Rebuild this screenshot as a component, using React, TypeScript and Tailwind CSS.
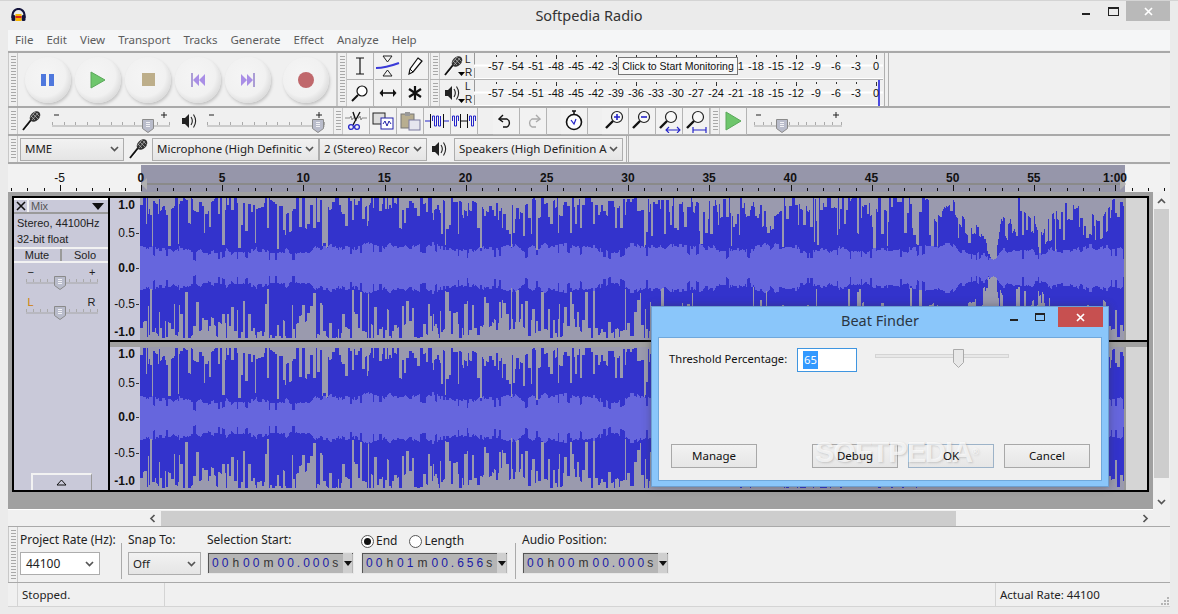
import React from "react";

function mulberry(a: number) {
  return () => {
    a |= 0; a = (a + 0x6d2b79f5) | 0;
    let t = Math.imul(a ^ (a >>> 15), 1 | a);
    t = (t + Math.imul(t ^ (t >>> 7), 61 | t)) ^ t;
    return ((t ^ (t >>> 14)) >>> 0) / 4294967296;
  };
}
function noise(seed: number, n: number, step: number) {
  const r = mulberry(seed);
  const pts = Array.from({ length: Math.ceil(n / step) + 3 }, () => r());
  return Array.from({ length: n }, (_, i) => {
    const p = i / step, k = Math.floor(p), f = p - k, s = f * f * (3 - 2 * f);
    return pts[k] * (1 - s) + pts[k + 1] * s;
  });
}
const W = 984;
function dip(x: number) {
  let m = 1;
  const g = (c: number, w: number, d: number) => 1 - d * Math.exp(-((x - c) ** 2) / (2 * w * w));
  m *= g(852, 6, 0.88) * g(832, 12, 0.4) * g(900, 5, 0.45) * g(960, 6, 0.25) * g(868, 3, 0.35) * g(800, 5, 0.2);
  return m;
}
function buildChannel(seed: number, cy: number) {
  const big = noise(seed, W, 60), mid = noise(seed + 1, W, 14), rm = noise(seed + 2, W, 26), rf = noise(seed + 3, W, 5);
  const r = mulberry(seed + 9);
  let dark = "", light = "", spike = 0, cur = 1, curL = 1, rj = 0;
  const pick = () => {
    const q = r();
    if (q < 0.05) return 0.3 + r() * 0.1;
    if (q < 0.24) return 0.5 + r() * 0.22;
    return 0.8 + r() * 0.36;
  };
  for (let x = 0; x < W; x++) {
    if (spike <= 0) {
      spike = 1 + Math.floor(r() * 3);
      cur = pick();
      curL = pick();
      rj = r() < 0.1 ? -0.08 : r() * 0.07;
    }
    spike--;
    const env = (0.84 + 0.2 * big[x] + 0.12 * mid[x]) * dip(x);
    const up = Math.min(1.09, cur * env), lo = Math.min(1.09, curL * env);
    const rmsv = (0.18 + 0.14 * rm[x] + 0.08 * rf[x] + rj) * (0.3 + 0.7 * dip(x));
    const px = x + 0.5;
    dark += `M${px} ${(cy - up * 64).toFixed(0)}V${(cy + lo * 64).toFixed(0)}`;
    light += `M${px} ${(cy - rmsv * 64).toFixed(0)}V${(cy + rmsv * 64).toFixed(0)}`;
  }
  return { dark, light };
}
const ch1 = buildChannel(11, 70);
const ch2 = buildChannel(11, 71);

function Grip() {
  return (
    <div className="w-[10px] h-full shrink-0 flex justify-center border-x border-[#c8c8c8] py-[3px]">
      <div className="w-[5px] h-full bg-[repeating-linear-gradient(to_bottom,#a8a8a8_0px,#a8a8a8_1px,transparent_1px,transparent_3px)]" />
    </div>
  );
}
function Mic({ arrow }: { arrow?: boolean }) {
  return (
    <svg width="22" height="22" viewBox="0 0 22 22" className="shrink-0">
      <path d="M2 20 L10 10" stroke="#111" strokeWidth="2" />
      <path d="M3.5 20.5 L11 11.5" stroke="#fff" strokeWidth="0.7" />
      <ellipse cx="14" cy="6.5" rx="6" ry="4.4" transform="rotate(-45 14 6.5)" fill="#333" />
      <path d="M10 6l4 4M12 4l5 5M14.500 2.500l4 4M11 10l6-7M9.500 7.500L14 2" stroke="#bbb" strokeWidth="0.7" />
      {arrow && <path d="M15 17h7l-3.500 4z" fill="#000" />}
    </svg>
  );
}
function Speaker({ arrow }: { arrow?: boolean }) {
  return (
    <svg width="22" height="22" viewBox="0 0 22 22" className="shrink-0">
      <path d="M2 8h3l4-4v14l-4-4H2z" fill="#222" />
      <path d="M11 7c1.600 2.400 1.600 5.600 0 8M13.500 4.500c2.600 4 2.600 9 0 13" fill="none" stroke="#222" strokeWidth="1.1" />
      {arrow && <path d="M15 17h7l-3.500 4z" fill="#000" />}
    </svg>
  );
}
function Round({ children }: { children: React.ReactNode }) {
  return (
    <div className="w-[46px] h-[46px] shrink-0 rounded-full bg-[radial-gradient(circle_at_43%_41%,#f5f5f5_0%,#f1f1f1_55%,#dcdcdc_74%,#c4c4c4_90%,#b2b2b2_100%)] shadow-[1px_2px_3px_#c4c4c4] flex items-center justify-center">
      {children}
    </div>
  );
}
function Cell({ children }: { children?: React.ReactNode }) {
  return (
    <div className="w-[27px] h-[27px] shrink-0 flex items-center justify-center bg-[#f2f2f2] border-r border-b border-[#b4b4b4]">
      {children}
    </div>
  );
}
function Thumb({ x, y }: { x: number; y: number }) {
  return (
    <g transform={`translate(${x - 6} ${y})`}>
      <path d="M0.500 0.500h11v9l-5.500 4l-5.500-4z" fill="#b9bccb" stroke="#8a8a8a" />
      <path d="M4 3.500h4M4 5.500h4M4 7.500h4" stroke="#fff" strokeWidth="0.8" />
    </g>
  );
}
function Slider({ width, at, line = 17, marks = true }: { width: number; at: number; line?: number; marks?: boolean }) {
  const ticks = [];
  for (let i = 0; i <= 10; i++) ticks.push((width - 1) * (i / 10));
  return (
    <svg width={width} height={line + 7} viewBox={`0 0 ${width} ${line + 7}`} className="shrink-0">
      {ticks.map((t, i) => <path key={i} d={`M${Math.round(t) + 0.5} ${line - 4}v3`} stroke="#aaa" />)}
      <path d={`M0 ${line}h${width}`} stroke="#a8a8a8" strokeWidth="1.2" />
      {marks && <path d={`M2 ${line - 11}h5M${width - 9} ${line - 11}h6M${width - 6} ${line - 14}v6`} stroke="#222" />}
      <Thumb x={at} y={line - 7} />
    </svg>
  );
}
function Chev({ c = "#555" }: { c?: string }) {
  return (
    <svg width="9" height="6" viewBox="0 0 9 6" className="shrink-0">
      <path d="M1 1l3.500 3.500L8 1" fill="none" stroke={c} strokeWidth="1.7" />
    </svg>
  );
}
function Sel({ w, children }: { w: string; children: string }) {
  return (
    <div className={`${w} h-[23px] shrink-0 flex items-center justify-between gap-[2px] pl-[4px] pr-[4px] border border-[#adadad] bg-gradient-to-b from-[#f2f2f2] to-[#e5e5e5] text-[11.5px] text-[#222] overflow-hidden`}>
      <span className="whitespace-nowrap">{children}</span>
      <Chev />
    </div>
  );
}
const dbs = ["-57", "-54", "-51", "-48", "-45", "-42", "-39", "-36", "-33", "-30", "-27", "-24", "-21", "-18", "-15", "-12", "-9", "-6", "-3", "0"];
function Meter({ blue }: { blue?: boolean }) {
  return (
    <div className="relative w-[409px] h-[27px] bg-[#f0f0f0] shrink-0 overflow-hidden">
      <svg width="409" height="27" className="absolute inset-0">
        <path d="M0.500 0V12M0.500 15V26" stroke="#9a9a9a" />
        <path d="M0 12.500H409M0 26H409" stroke="#fff" strokeWidth="2" />
        {dbs.map((_, i) => <path key={i} d={`M${22 + i * 20}.5 2v${i % 4 === 3 ? 4 : 2}`} stroke="#333" />)}
        {blue && <path d="M405 0V27" stroke="#4a4ae0" strokeWidth="2" />}
      </svg>
      <div className="absolute left-[12px] top-[6px] flex font-['Liberation_Sans',sans-serif] text-[11px] leading-[14px] text-[#111]">
        {dbs.map((d) => (
          <span key={d} className="w-[20px] text-center">{d}</span>
        ))}
      </div>
    </div>
  );
}
function LR() {
  return (
    <div className="flex flex-col text-[10px] leading-[13px] text-[#222] font-['Liberation_Sans',sans-serif] w-[8px]">
      <span>L</span>
      <span>R</span>
    </div>
  );
}
const secs = ["-5", "0", "5", "10", "15", "20", "25", "30", "35", "40", "45", "50", "55", "1:00"];
function Ruler() {
  return (
    <div className="relative h-[27px] mt-[1px] bg-[#f2f2f2] flex shrink-0">
      <div className="w-[133px] shrink-0" />
      <div className="w-[984px] shrink-0 bg-[#9696aa]" />
      <svg width="1162" height="27" className="absolute inset-0">
        <path d="M133 19H1117" stroke="#8a8a8a" strokeWidth="2" />
        {Array.from({ length: 73 }, (_, i) => 3.1 + i * 16.24).map((t, i) => (
          <path key={i} d={`M${Math.round(t) + 0.5} ${i % 5 === 3 ? 20 : 23}V26`} stroke="#111" />
        ))}
        <path d="M139 13l-6 6l6 6z" fill="#b0b0b0" />
        <path d="M1112 13l6 6l-6 6z" fill="#b0b0b0" />
      </svg>
      <div className="absolute left-[11px] top-[6px] flex font-['Liberation_Sans',sans-serif] text-[12px] leading-[14px] text-[#111]">
        {secs.map((s) => (
          <span key={s} className={`w-[81.2px] text-center shrink-0 whitespace-nowrap ${s === "-5" ? "" : "font-bold"}`}>{s}</span>
        ))}
      </div>
    </div>
  );
}
function Lab({ t, bold, tick, mt }: { t: string; bold?: boolean; tick?: boolean; mt: string }) {
  return (
    <span className={`${mt} h-[14px] flex items-center gap-[1px] ${bold ? "font-bold" : ""}`}>
      {t}
      <i className={`w-[3px] h-px ${tick ? "bg-[#333]" : ""}`} />
    </span>
  );
}
function Amp1() {
  return (
    <div className="w-[30px] h-full shrink-0 bg-[#c9c9d9] flex flex-col items-end pr-[1px] font-['Liberation_Sans',sans-serif] text-[12px] text-[#111]">
      <Lab t="1.0" bold mt="mt-[0px]" />
      <Lab t="0.5" tick mt="mt-[14px]" />
      <Lab t="0.0" bold tick mt="mt-[21px]" />
      <Lab t="-0.5" tick mt="mt-[22px]" />
      <Lab t="-1.0" bold mt="mt-[14px]" />
    </div>
  );
}
function Amp2() {
  return (
    <div className="w-[30px] h-full shrink-0 bg-[#c9c9d9] flex flex-col items-end pr-[1px] font-['Liberation_Sans',sans-serif] text-[12px] text-[#111]">
      <Lab t="1.0" bold mt="mt-[0px]" />
      <Lab t="0.5" tick mt="mt-[15px]" />
      <Lab t="0.0" bold tick mt="mt-[20px]" />
      <Lab t="-0.5" tick mt="mt-[22px]" />
      <Lab t="-1.0" bold mt="mt-[14px]" />
    </div>
  );
}
function Channel({ d, h }: { d: { dark: string; light: string }; h: number }) {
  return (
    <div className="flex-1 min-w-0 bg-[#d5d5d5] flex overflow-hidden" style={{ height: h }}>
      <svg width="984" height={h} viewBox={`0 0 984 ${h}`} shapeRendering="crispEdges" className="shrink-0 bg-[#9a9aae]">
        <path d={d.dark} stroke="#3333cc" strokeWidth="1" fill="none" />
        <path d={d.light} stroke="#6666dd" strokeWidth="1" fill="none" />
      </svg>
      <div className="w-[2px] bg-[#9a9a9a] shrink-0" />
    </div>
  );
}
function Panel() {
  return (
    <div className="w-[96px] shrink-0 h-full bg-[#c9c9d9] border-r-2 border-black flex flex-col text-[11px] text-[#222] font-['Liberation_Sans',sans-serif]">
      <div className="flex h-[16px] border-b-2 border-[#9a9a9a]">
        <div className="w-[15px] flex items-center justify-center border-r-2 border-[#f4f4f4] border-t-2 border-t-white">
          <svg width="10" height="10" viewBox="0 0 10 10"><path d="M1 1l8 8M9 1l-8 8" stroke="#111" strokeWidth="1.6" /></svg>
        </div>
        <div className="flex-1 flex items-center justify-between pl-[2px] pr-[4px] text-[#555] border-t-2 border-white">
          <span>Mix</span>
          <svg width="12" height="7" viewBox="0 0 12 7"><path d="M0 0h12l-6 7z" fill="#111" /></svg>
        </div>
      </div>
      <div className="h-[33px] pl-[3px] pt-[1px] leading-[16px] whitespace-nowrap">
        <div>Stereo, 44100Hz</div>
        <div>32-bit float</div>
      </div>
      <div className="flex h-[16px] border-y-2 border-[#f2f2f2] text-center leading-[13px]">
        <div className="flex-1 border-r-2 border-[#9a9a9a]">Mute</div>
        <div className="flex-1">Solo</div>
      </div>
      <div className="flex-1 flex flex-col items-center pt-[4px] pl-[1px]">
        <div className="w-[70px] flex justify-between px-[1px] text-[11px] leading-[10px] h-[10px]"><span>−</span><span>+</span></div>
        <div className="-mt-[5px]"><Slider width={72} at={34} line={11} marks={false} /></div>
        <div className="w-[70px] flex justify-between px-[1px] text-[11px] leading-[10px] h-[10px] mt-[7px]"><span className="text-[#d08000]">L</span><span>R</span></div>
        <div className="-mt-[5px]"><Slider width={72} at={34} line={11} marks={false} /></div>
      </div>
      <div className="h-[17px] w-[61px] self-center bg-[#c9c9d9] border-t-2 border-l-2 border-r border-[#f2f2f2] border-r-[#9a9a9a] flex items-center justify-center">
        <svg width="11" height="7" viewBox="0 0 11 7"><path d="M5.500 1L10 6H1z" fill="none" stroke="#111" /></svg>
      </div>
    </div>
  );
}
function Digits({ t }: { t: string }) {
  return (
    <div className="w-[147px] h-[22px] shrink-0 border border-[#e8e8e8] bg-[#b5b5b5] flex items-center justify-between pl-[4px] pr-[1px] shadow-[inset_1px_1px_0_#555] overflow-hidden">
      <span className="flex font-['Liberation_Sans',sans-serif] text-[12px] text-[#1a1aa8] tracking-[3px] whitespace-pre">
        {t.split("").map((c, i) =>
          c === "s" ? <span key={i} className="text-[#333]">{c}</span>
          : /[hm]/.test(c) ? <span key={i} className="text-[#333] mx-[1px]">{c}</span>
          : <span key={i}>{c}</span>
        )}
      </span>
      <div className="w-[9px] h-full bg-[#cfcfcf] flex items-center justify-center shrink-0">
        <svg width="8" height="5" viewBox="0 0 8 5"><path d="M0 0h8L4 5z" fill="#111" /></svg>
      </div>
    </div>
  );
}
function Radio({ on }: { on?: boolean }) {
  return (
    <div className="w-[13px] h-[13px] rounded-full border border-[#555] bg-white flex items-center justify-center shrink-0">
      {on && <div className="w-[7px] h-[7px] rounded-full bg-[#111]" />}
    </div>
  );
}
function DlgBtn({ children, tone = "border-[#a8a8a8]" }: { children: React.ReactNode; tone?: string }) {
  return (
    <div className={`w-[86px] h-[24px] shrink-0 border ${tone} bg-gradient-to-b from-[#f2f2f2] to-[#e6e6e6] text-[11.5px] text-[#111] flex items-center justify-center`}>
      <span className="relative z-10">{children}</span>
    </div>
  );
}
const Zoomer = ({ extra }: { extra?: React.ReactNode }) => (
  <svg width="24" height="24" viewBox="0 0 24 24">
    <circle cx="14" cy="8" r="5.500" fill="#f8f8f8" stroke="#222" strokeWidth="1.2" />
    <path d="M10 12L3 19" stroke="#111" strokeWidth="2.4" />
    {extra}
  </svg>
);

export default function App() {
  return (
    <div className="relative w-[1178px] h-[614px] overflow-hidden bg-[#ebebeb] font-['Noto_Sans',sans-serif] border-t border-[#d4d4d4]">
      {/* title bar */}
      <div className="h-[29px] flex items-center relative pl-[11px]">
        <svg width="15" height="14" viewBox="0 0 15 14" className="-mt-[2px]">
          <path d="M1.500 10V7a6 6 0 0 1 12 0v3" fill="none" stroke="#14143c" strokeWidth="2.2" />
          <rect x="0.500" y="7" width="4" height="6" rx="1.500" fill="#14143c" />
          <rect x="10.500" y="7" width="4" height="6" rx="1.500" fill="#14143c" />
          <rect x="4.500" y="6" width="6" height="7" fill="#f7b500" />
          <path d="M4.500 9h6" stroke="#d8221c" strokeWidth="2" />
        </svg>
        <div className="absolute left-0 right-0 top-[4px] text-center text-[14.5px] leading-[20px] text-[#333]">Softpedia Radio</div>
        <div className="absolute right-[8px] top-0 flex items-start">
          <div className="w-[8px] h-[2px] bg-[#222] mt-[12px] mr-[18px]" />
          <div className="w-[11px] h-[9px] border border-[#222] border-t-2 mt-[6px] mr-[7px]" />
          <div className="w-[44px] h-[20px] bg-[#b9b9b9] flex items-center justify-center">
            <svg width="9" height="9" viewBox="0 0 9 9"><path d="M1 1l7 7M8 1L1 8" stroke="#fff" strokeWidth="1.7" /></svg>
          </div>
        </div>
      </div>

      <div className="mx-[8px] flex flex-col h-[577px] bg-[#f0f0f0]">
        {/* menu */}
        <div className="h-[20px] shrink-0 bg-[#f5f6f7] flex items-center pl-[7px] gap-[13px] text-[11.5px] text-[#5c5c5c]">
          {["File", "Edit", "View", "Transport", "Tracks", "Generate", "Effect", "Analyze", "Help"].map((m) => <span key={m}>{m}</span>)}
        </div>

        {/* row 1 */}
        <div className="h-[57px] shrink-0 mt-[1px] flex border-y-2 border-[#a9a9a9] bg-[#f0f0f0]">
          <Grip />
          <div className="w-[319px] shrink-0 flex items-center pl-[7px] gap-[4px] border-r border-[#c8c8c8]">
            <Round><svg width="14" height="14"><rect x="0" y="1" width="5" height="12" fill="#4f78dd" /><rect x="8" y="1" width="5" height="12" fill="#4f78dd" /></svg></Round>
            <Round><svg width="16" height="18"><path d="M1 1v16l14-8z" fill="#6ec66c" stroke="#5aa85a" /></svg></Round>
            <Round><div className="w-[13px] h-[13px] bg-[#bdae8a]" /></Round>
            <Round><svg width="14" height="14"><path d="M1 0v14" stroke="#8c78c8" strokeWidth="1.4" /><path d="M8 1L2 7l6 6zM14 1L8 7l6 6z" fill="#a98ee6" /></svg></Round>
            <Round><svg width="14" height="14"><path d="M13 0v14" stroke="#8c78c8" strokeWidth="1.4" /><path d="M6 1l6 6l-6 6zM0 1l6 6l-6 6z" fill="#a98ee6" /></svg></Round>
            <div className="w-[4px] shrink-0" />
            <Round><div className="w-[16px] h-[16px] rounded-full bg-[#c0686c]" /></Round>
          </div>
          <Grip />
          <div className="w-[83px] shrink-0 grid grid-cols-3 content-start">
            <Cell><svg width="12" height="18"><path d="M2 1h8M6 1v16M2 17h8" stroke="#111" strokeWidth="1.2" fill="none" /></svg></Cell>
            <Cell><svg width="25" height="22" viewBox="0 0 25 22"><path d="M8 1h9l-4.500 6zM8 21h9l-4.500-6z" fill="none" stroke="#222" /><path d="M1 13c8 0 12-1 23-5" stroke="#3a3ad8" strokeWidth="2.2" fill="none" /></svg></Cell>
            <Cell><svg width="16" height="18" viewBox="0 0 16 18"><path d="M11 1l4 3L6 15l-4 2l1-5z" fill="#fff" stroke="#111" strokeWidth="1.2" /><path d="M3 12l3 3" stroke="#111" /></svg></Cell>
            <Cell><svg width="18" height="18" viewBox="0 0 18 18"><circle cx="11" cy="7" r="5" fill="#fff" stroke="#111" strokeWidth="1.2" /><path d="M7 11l-6 6" stroke="#111" strokeWidth="2" /></svg></Cell>
            <Cell><svg width="18" height="10" viewBox="0 0 18 10"><path d="M4 1L0.500 5L4 9zM14 1l3.500 4L14 9z" fill="#111" /><path d="M3 5h12" stroke="#111" strokeWidth="1.6" /></svg></Cell>
            <Cell><svg width="14" height="14" viewBox="0 0 14 14"><path d="M7 0v14M1 3l12 8M13 3L1 11" stroke="#111" strokeWidth="2.2" /></svg></Cell>
          </div>
          <div className="flex flex-col">
            <div className="h-[27px] flex items-center overflow-hidden border-b border-[#b4b4b4]">
              <Grip />
              <div className="w-[34px] flex items-center pl-[3px]"><Mic arrow /><LR /></div>
              <Meter />
            </div>
            <div className="h-[26px] flex items-center overflow-hidden">
              <Grip />
              <div className="w-[34px] flex items-center pl-[3px]"><Speaker arrow /><LR /></div>
              <Meter blue />
            </div>
          </div>
          <div className="w-[5px] border-x border-[#b0b0b0] ml-[1px]" />
        </div>

        {/* row 2 */}
        <div className="h-[28px] shrink-0 flex items-center border-b-2 border-[#a9a9a9]">
          <Grip />
          <div className="ml-[3px]"><Mic /></div>
          <div className="ml-[9px]"><Slider width={118} at={96} /></div>
          <div className="ml-[10px]"><Speaker /></div>
          <div className="ml-[5px]"><Slider width={118} at={111} /></div>
          <div className="w-[8px]" />
          <Grip />
          <div className="flex">
            <Cell><svg width="22" height="20" viewBox="0 0 22 20"><path d="M0 7h5l1-2 1 4 1-2h1M13 7h1l1-2 1 4 1-2h5" stroke="#888" fill="none" /><path d="M15 1L8 14M8 1l3 9" stroke="#111" strokeWidth="1.4" /><circle cx="6" cy="16" r="2.400" fill="none" stroke="#2828c8" strokeWidth="1.3" /><circle cx="12" cy="16" r="2.400" fill="none" stroke="#2828c8" strokeWidth="1.3" /></svg></Cell>
            <Cell><svg width="22" height="20" viewBox="0 0 22 20"><rect x="1" y="2" width="12" height="11" fill="#ddd" stroke="#222" /><rect x="9" y="7" width="12" height="11" fill="#fff" stroke="#2323aa" /><path d="M11 13l2-3 2 5 2-5 2 3" stroke="#2323aa" fill="none" /></svg></Cell>
            <Cell><svg width="22" height="20" viewBox="0 0 22 20"><rect x="2" y="3" width="13" height="14" fill="#b8ae90" stroke="#777" /><rect x="6" y="1" width="5" height="4" fill="#999" /><rect x="10" y="9" width="11" height="10" fill="#e5e5ee" stroke="#7a7aa0" /></svg></Cell>
            <Cell><svg width="24" height="16" viewBox="0 0 24 16"><path d="M5.500 1v14M18.500 1v14" stroke="#111" /><path d="M0 8h5M19 8h5" stroke="#2323c8" /><path d="M7.500 8V3h2v10h2V3h2v10h2V3" fill="none" stroke="#2323c8" /></svg></Cell>
            <Cell><svg width="24" height="16" viewBox="0 0 24 16"><path d="M8.500 1v14M15.500 1v14M8 8h8" stroke="#111" /><path d="M0.500 8V3h2v10h2V3h2v5M17.500 8V3h2v10h2V3h2v5" fill="none" stroke="#2323c8" /></svg></Cell>
          </div>
          <div className="w-[15px]" />
          <Cell><svg width="16" height="14" viewBox="0 0 16 14"><path d="M5 1L1 5l4 3" fill="none" stroke="#111" strokeWidth="1.4" /><path d="M2 5h7a4.500 4.500 0 0 1 0 8H5" fill="none" stroke="#111" strokeWidth="1.4" /></svg></Cell>
          <Cell><svg width="16" height="14" viewBox="0 0 16 14"><path d="M11 1l4 4l-4 3" fill="none" stroke="#aaa" strokeWidth="1.4" /><path d="M14 5H7a4.500 4.500 0 0 0 0 8h4" fill="none" stroke="#aaa" strokeWidth="1.4" /></svg></Cell>
          <div className="w-[14px]" />
          <Cell><svg width="18" height="21" viewBox="0 0 18 21"><circle cx="9" cy="12" r="7.500" fill="#fff" stroke="#111" strokeWidth="1.6" /><path d="M7 1h4M9 1v4" stroke="#111" strokeWidth="1.5" /><path d="M6 10l3 4 2-5" fill="none" stroke="#2323c8" strokeWidth="1.2" /></svg></Cell>
          <div className="w-[14px]" />
          <Cell><Zoomer extra={<path d="M11 8h6M14 5v6" stroke="#2323c8" strokeWidth="1.6" />} /></Cell>
          <Cell><Zoomer extra={<path d="M11 8h6" stroke="#2323c8" strokeWidth="1.6" />} /></Cell>
          <Cell><Zoomer extra={<path d="M9 21h14M12 18l-3 3 3 3M20 18l3 3-3 3" stroke="#2323c8" strokeWidth="1.1" fill="none" />} /></Cell>
          <Cell><Zoomer extra={<path d="M9 21h13M9 18v6M22 18v6" stroke="#2323c8" strokeWidth="1.2" fill="none" />} /></Cell>
          <Grip />
          <Cell><svg width="16" height="20"><path d="M1 1v18l15-9z" fill="#6ec66c" stroke="#5aa85a" /></svg></Cell>
          <div className="ml-[7px]"><Slider width={88} at={28} /></div>
        </div>

        {/* row 3 */}
        <div className="h-[28px] shrink-0 flex items-center border-b-2 border-[#a9a9a9]">
          <Grip />
          <div className="ml-[2px]"><Sel w="w-[104px]">MME</Sel></div>
          <div className="ml-[4px] mr-[1px]"><Mic /></div>
          <div className="ml-[1px]"><Sel w="w-[167px]">Microphone (High Definitic</Sel></div>
          <Sel w="w-[108px]">2 (Stereo) Recor</Sel>
          <div className="ml-[3px] mr-[2px]"><Speaker /></div>
          <Sel w="w-[169px]">Speakers (High Definition A</Sel>
          <div className="w-[3px] h-full ml-[3px] border-x border-[#b0b0b0]" />
        </div>

        <Ruler />

        {/* tracks + scrollbars */}
        <div className="flex h-[318px] shrink-0">
          <div className="flex-1 min-w-0 bg-[#a0a0a0] pt-[4px] pl-[4px] pr-[4px] border-b border-white">
            <div className="h-[296px] border-2 border-black flex">
              <Panel />
              <div className="flex-1 min-w-0 flex flex-col">
                <div className="flex h-[142px]">
                  <Amp1 />
                  <Channel d={ch1} h={142} />
                </div>
                <div className="h-[7px] bg-[#a0a0a0] border-t-2 border-black" />
                <div className="flex h-[143px]">
                  <Amp2 />
                  <Channel d={ch2} h={143} />
                </div>
              </div>
            </div>
          </div>
          <div className="w-[17px] shrink-0 bg-[#f0f0f0] flex flex-col items-center">
            <div className="h-[17px] flex items-center"><svg width="9" height="6" viewBox="0 0 9 6"><path d="M1 5l3.500-3.500L8 5" fill="none" stroke="#555" strokeWidth="1.7" /></svg></div>
            <div className="w-[15px] h-[269px] bg-[#cdcdcd]" />
            <div className="flex-1 flex items-end pb-[5px]"><Chev /></div>
          </div>
        </div>

        {/* h scrollbar */}
        <div className="h-[16px] shrink-0 bg-[#f0f0f0] flex items-center pl-[141px]">
          <svg width="7" height="9" viewBox="0 0 6 9"><path d="M5 1L1.500 4.500L5 8" fill="none" stroke="#555" strokeWidth="1.7" /></svg>
          <div className="w-[795px] h-[15px] bg-[#cdcdcd] ml-[5px]" />
          <div className="flex-1 flex justify-end pr-[21px]"><svg width="7" height="9" viewBox="0 0 6 9"><path d="M1 1l3.500 3.500L1 8" fill="none" stroke="#555" strokeWidth="1.7" /></svg></div>
        </div>

        {/* selection bar */}
        <div className="h-[57px] shrink-0 flex border-y border-[#a9a9a9] text-[12px] text-[#222]">
          <Grip />
          <div className="w-[103px] pl-[2px] pt-[4px] shrink-0 flex flex-col">
            <span className="h-[20px] whitespace-nowrap">Project Rate (Hz):</span>
            <div className="w-[80px] h-[23px] border border-[#adadad] bg-white flex items-center justify-between pl-[5px] pr-[5px] mt-[1px]">44100<Chev /></div>
          </div>
          <div className="w-px h-[36px] bg-[#aaa] mt-[16px] shrink-0" />
          <div className="w-[85px] pl-[6px] pt-[4px] shrink-0 flex flex-col">
            <span className="h-[20px]">Snap To:</span>
            <div className="mt-[1px]"><Sel w="w-[73px]">Off</Sel></div>
          </div>
          <div className="w-[154px] shrink-0 pt-[4px] flex flex-col">
            <span className="h-[20px]">Selection Start:</span>
            <div className="mt-[1px]"><Digits t="00h00m00.000s" /></div>
          </div>
          <div className="w-[154px] shrink-0 pt-[4px] flex flex-col">
            <div className="h-[20px] flex items-center gap-[2px]"><Radio on /><span className="mr-[10px]">End</span><Radio /><span>Length</span></div>
            <div className="mt-[1px]"><Digits t="00h01m00.656s" /></div>
          </div>
          <div className="w-px h-[36px] bg-[#aaa] mt-[16px] shrink-0" />
          <div className="pl-[6px] pt-[4px] shrink-0 flex flex-col">
            <span className="h-[20px]">Audio Position:</span>
            <div className="mt-[1px]"><Digits t="00h00m00.000s" /></div>
          </div>
        </div>

        {/* status */}
        <div className="h-[24px] shrink-0 flex items-center text-[11.5px] text-[#222] border-b border-[#d4d4d4] relative">
          <div className="w-[148px] h-full ml-[9px] border-x border-[#d4d4d4] pl-[4px] flex items-center">Stopped.</div>
          <div className="flex-1" />
          <div className="w-[175px] h-full border-l border-[#d4d4d4] pl-[4px] flex items-center">Actual Rate: 44100</div>
          <svg width="9" height="9" className="absolute right-[1px] bottom-[1px]"><path d="M7 1h2v2H7zM4 4h2v2H4zM7 4h2v2H7zM1 7h2v2H1zM4 7h2v2H4zM7 7h2v2H7z" fill="#b5b5b5" /></svg>
        </div>
      </div>

      {/* tooltip */}
      <div className="absolute left-[618px] top-[56px] w-[120px] h-[18px] bg-[#f8f8f8] border border-[#777] text-[10.5px] leading-[16px] text-center text-[#111] font-['Liberation_Sans',sans-serif] whitespace-nowrap">
        Click to Start Monitoring
      </div>

      {/* dialog */}
      <div className="absolute left-[651px] top-[305px] w-[458px] h-[181px] bg-[#8ac6fa] border border-[#6f9fd0] shadow-[0_0_8px_rgba(60,60,60,0.45)] flex flex-col">
        <div className="h-[30px] shrink-0 relative text-center text-[14.5px] leading-[26px] text-[#2a3642]">
          Beat Finder
          <div className="absolute right-[5px] top-0 flex items-start">
            <div className="w-[8px] h-[2px] bg-[#222] mt-[12px] mr-[17px]" />
            <div className="w-[10px] h-[8px] border border-[#222] border-t-2 mt-[6px] mr-[13px]" />
            <div className="w-[45px] h-[20px] bg-[#c75050] flex items-center justify-center">
              <svg width="9" height="9" viewBox="0 0 9 9"><path d="M1 1l7 7M8 1L1 8" stroke="#fff" strokeWidth="1.7" /></svg>
            </div>
          </div>
        </div>
        <div className="relative mx-[6px] h-[144px] bg-[#f0f0f0] border border-[#6fa8dc] flex flex-col justify-between pt-[10px] pb-[12px] pl-[12px] pr-[11px]">
          <div className="flex items-start text-[11.2px] text-[#111]">
            <span className="-ml-[2px] w-[128px] shrink-0 leading-[22px] whitespace-nowrap">Threshold Percentage:</span>
            <div className="w-[60px] h-[24px] shrink-0 bg-white border border-[#3f95e0] flex items-center pl-[5px]"><span className="bg-[#3399ff] text-white leading-[18px] px-[1px]">65</span></div>
            <svg width="136" height="22" viewBox="0 0 136 22" className="ml-[18px] shrink-0">
              <rect x="0.500" y="6.500" width="133" height="3" fill="#e8e8e8" stroke="#d4d4d4" />
              <path d="M78.500 1.500h10v13l-5 5l-5-5z" fill="#e8e8e8" stroke="#aaa" />
            </svg>
          </div>
          <div className="flex items-center">
            <DlgBtn>Manage</DlgBtn>
            <div className="w-[55px]" />
            <DlgBtn>Debug</DlgBtn>
            <div className="w-[10px]" />
            <DlgBtn tone="border-[#9db3c8]">OK</DlgBtn>
            <div className="w-[10px]" />
            <DlgBtn>Cancel</DlgBtn>
          </div>
          <div className="absolute z-[5] left-[156px] top-[99px] font-['Liberation_Sans',sans-serif] font-bold text-[29px] leading-[30px] tracking-[-1px] text-white/70 [text-shadow:1px_1px_2px_rgba(120,120,120,0.3)] whitespace-nowrap">
            SOFTPEDIA<span className="text-[9px] align-top">®</span>
          </div>
        </div>
      </div>
    </div>
  );
}
